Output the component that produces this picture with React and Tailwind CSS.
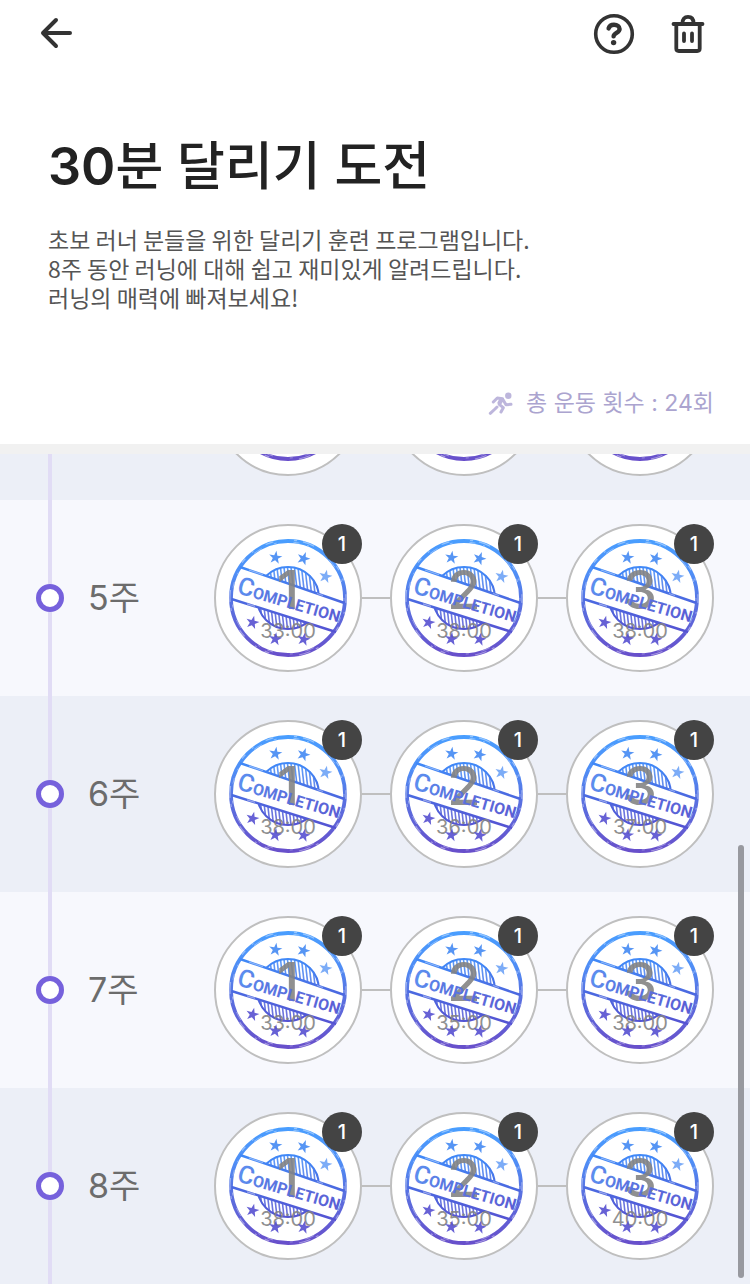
import React from "react";

const WEEKS = [
  { week: 4, times: ["33:00", "33:00", "33:00"] },
  { week: 5, times: ["33:00", "38:00", "38:00"] },
  { week: 6, times: ["38:00", "36:00", "37:00"] },
  { week: 7, times: ["33:00", "35:00", "38:00"] },
  { week: 8, times: ["38:00", "35:00", "40:00"] },
];

const STARS = [
  [46.5, 18.5, 8],
  [74.5, 19.5, 20],
  [96.5, 37.5, 12],
  [23.5, 83.5, 14],
  [46.3, 100, 8],
  [74.7, 100.3, 12],
];

const STAR = "M0 -6.9 L1.6 -2.1 L6.6 -2.1 L2.6 0.9 L4.1 5.7 L0 2.8 L-4.1 5.7 L-2.6 0.9 L-6.6 -2.1 L-1.6 -2.1 Z";

const STRIPES = Array.from({ length: 19 }, (_, i) => 28 + i * 3.5);

function StampDefs() {
  return (
    <svg width="0" height="0" className="absolute" aria-hidden="true">
      <defs>
        <linearGradient id="ink" gradientUnits="userSpaceOnUse" x1="0" y1="0" x2="0" y2="118">
          <stop offset="0" stopColor="#3b97ff" />
          <stop offset="0.3" stopColor="#4285f5" />
          <stop offset="0.5" stopColor="#4a6be2" />
          <stop offset="1" stopColor="#5d41c6" />
        </linearGradient>
        <linearGradient id="letterInk" gradientUnits="userSpaceOnUse" x1="0" y1="0" x2="100" y2="0">
          <stop offset="0" stopColor="#5c90f0" />
          <stop offset="0.3" stopColor="#5a78e2" />
          <stop offset="1" stopColor="#5a60d6" />
        </linearGradient>
        <clipPath id="outsideBand">
          <path d="M-10 -10 H130 V68.5 L-10 20.5 Z M-10 56 L130 100.5 V130 H-10 Z" />
        </clipPath>
        <clipPath id="hub">
          <circle cx="59" cy="59" r="31" />
        </clipPath>
      </defs>
    </svg>
  );
}

function StampBase() {
  return (
    <svg viewBox="0 0 118 118" className="absolute inset-[13px] size-[118px]" aria-hidden="true">
      <circle cx="59" cy="59" r="57" fill="none" stroke="url(#ink)" strokeOpacity="0.93" strokeWidth="3.8" />
      <circle cx="59" cy="59" r="58" fill="none" stroke="#fff" strokeOpacity="0.4" strokeWidth="1.2" strokeDasharray="5 9 2 14 8 21 3 6 12 30" />
      <circle cx="59" cy="59" r="56" fill="none" stroke="#fff" strokeOpacity="0.35" strokeWidth="1" strokeDasharray="3 17 6 8 2 25 9 13" />
      <g clipPath="url(#outsideBand)">
        <g clipPath="url(#hub)" stroke="url(#ink)" strokeOpacity="0.85" strokeWidth="1.6">
          {STRIPES.map((x) => (
            <path key={x} d={`M${x - 5} 24 L${x + 3} 94`} />
          ))}
        </g>
        <circle cx="59" cy="59" r="31" fill="none" stroke="url(#ink)" strokeWidth="2" />
      </g>
      <path d="M11 28 L115.5 64 M2.5 60 L107 93" stroke="url(#ink)" strokeWidth="2.4" fill="none" />
      <path d="M20 31 L34 35.8 M88 54.5 L94 56.5 M18 64.9 L26 67.4" stroke="#fff" strokeOpacity="0.4" strokeWidth="1.2" />
    </svg>
  );
}

function StampInk() {
  return (
    <svg viewBox="0 0 118 118" className="absolute inset-[13px] size-[118px]" aria-hidden="true">
      {STARS.map(([x, y, r]) => (
        <path key={`${x}-${y}`} d={STAR} transform={`translate(${x} ${y}) rotate(${r})`} fill={y < 59 ? "#4489f3" : "#5650d0"} fillOpacity={x > 90 ? 0.7 : 0.9} />
      ))}
      <text
        transform="translate(7 54) rotate(16)"
        fill="url(#letterInk)"
        fontFamily="Roboto, sans-serif"
        fontWeight="700"
        fontSize="16"
      >
        <tspan fontSize="25" fontWeight="500">C</tspan>
        OMPLETION
      </text>
    </svg>
  );
}

function Session({ number, time }) {
  return (
    <button
      type="button"
      className="relative size-[148px] shrink-0 rounded-full border-2 border-[#bfbfbf] bg-white text-[#848484]"
    >
      <StampBase />
      <span className="relative flex flex-col items-center pt-3 opacity-90">
        <span className="text-[54px] font-medium leading-[54px]">{number}</span>
        <span className="text-xl leading-7">{time}</span>
      </span>
      <StampInk />
      <span className="absolute -right-[2px] -top-[2px] flex size-10 items-center justify-center rounded-full bg-[#444] text-xl font-medium text-white">
        1
      </span>
    </button>
  );
}

function WeekRow({ week, times }) {
  return (
    <li className="flex h-[196px] shrink-0 items-center justify-between pr-9 even:bg-[#f7f8fd] odd:bg-[#eceff7]">
      <div className="flex items-center self-stretch">
        <div className="flex w-[100px] flex-col items-center self-stretch">
          <span className="w-1 flex-1 bg-[#e1dcf5]" />
          <span className="size-7 rounded-full border-5 border-[#7661dc] bg-white" />
          <span className="w-1 flex-1 bg-[#e1dcf5]" />
        </div>
        <h2 className="-ml-3 text-[34px] font-normal leading-10 text-[#6c6c6c]">{week}주</h2>
      </div>
      <div className="flex items-center">
        {times.map((time, i) => (
          <React.Fragment key={i}>
            {i > 0 && <span className="h-[2px] w-7 bg-[#bfbfbf]" />}
            <Session number={i + 1} time={time} />
          </React.Fragment>
        ))}
      </div>
    </li>
  );
}

export default function App() {
  return (
    <div className="relative flex h-screen flex-col overflow-hidden bg-white font-['Inter','Noto_Sans_CJK_KR',sans-serif]">
      <StampDefs />
      <header className="flex h-[68px] shrink-0 items-center justify-between pl-9 pr-10">
        <button type="button" aria-label="뒤로">
          <svg width="40" height="40" viewBox="0 0 40 40" fill="none" stroke="#333" strokeWidth="4" strokeLinecap="round" strokeLinejoin="round">
            <path d="M7 19 H34 M20 6 L7 19 L20 32" />
          </svg>
        </button>
        <div className="flex items-center gap-7">
          <button type="button" aria-label="도움말">
            <svg width="48" height="48" viewBox="0 0 48 48" fill="none" stroke="#333" strokeLinecap="round" strokeLinejoin="round">
              <circle cx="24" cy="24" r="18.3" strokeWidth="3.6" />
              <path d="M18.6 18.4 C19.4 15.6 21.4 14.8 24 14.8 C27.4 14.8 29.6 16.4 29.6 19 C29.6 22.8 23.8 23 23.6 26.4" strokeWidth="4.4" />
              <circle cx="23.6" cy="32.6" r="2.7" fill="#333" stroke="none" />
            </svg>
          </button>
          <button type="button" aria-label="삭제">
            <svg width="44" height="48" viewBox="0 0 44 48" fill="none" stroke="#333" strokeWidth="3.8" strokeLinecap="round" strokeLinejoin="round">
              <path d="M7.5 14 H36.5 M16.5 13 C16.5 9 18.5 6.8 22 6.8 C25.5 6.8 27.5 9 27.5 13 M10.3 14.5 V38.5 Q10.3 41 12.8 41 H31.2 Q33.7 41 33.7 38.5 V14.5 M18 23.5 V31 M26 23.5 V31" />
            </svg>
          </button>
        </div>
      </header>

      <section className="flex h-[376px] shrink-0 flex-col px-12 pt-[61px] pr-9">
        <h1 className="text-[52px] font-medium leading-[76px] text-[#222]">
          <span className="font-semibold">30</span>분 달리기 도전
        </h1>
        <p className="mt-5 font-['Noto_Sans_CJK_KR',sans-serif] text-[23px] leading-[29px] text-[#555]">
          초보 러너 분들을 위한 달리기 훈련 프로그램입니다.
          <br />
          8주 동안 러닝에 대해 쉽고 재미있게 알려드립니다.
          <br />
          러닝의 매력에 빠져보세요!
        </p>
        <p className="mb-[23px] mt-auto flex items-center justify-end gap-3 text-[23px] leading-9 text-[#aba4cf]">
          <svg width="26" height="26" viewBox="0 0 26 26" fill="none" stroke="#bdb6dc" strokeWidth="3" strokeLinecap="round" strokeLinejoin="round" aria-hidden="true">
            <circle cx="20.3" cy="5.7" r="3.2" fill="#bdb6dc" stroke="none" />
            <path d="M5.3 12 L9.3 8 L14.6 8.7 L11.2 14.3 L15.3 17.7 L13 22 M15.2 10 L18 14.8 L23 14.3 M9 17 L7 19 L2.3 23.3" />
            <path d="M12 9 L15 10 L12.5 13.8 L10 13 Z" fill="#bdb6dc" strokeWidth="1.5" />
          </svg>
          총 운동 횟수 : 24회
        </p>
      </section>

      <div className="h-[10px] shrink-0 bg-[#f1f1f1]" />

      <main className="relative flex min-h-0 flex-1 flex-col justify-end overflow-hidden">
        <ol className="flex shrink-0 flex-col">
          {WEEKS.map((w) => (
            <WeekRow key={w.week} week={w.week} times={w.times} />
          ))}
        </ol>
        <span className="absolute bottom-[6px] right-[6px] h-[433px] w-[6px] rounded-full bg-[#98999f]" />
      </main>
    </div>
  );
}
